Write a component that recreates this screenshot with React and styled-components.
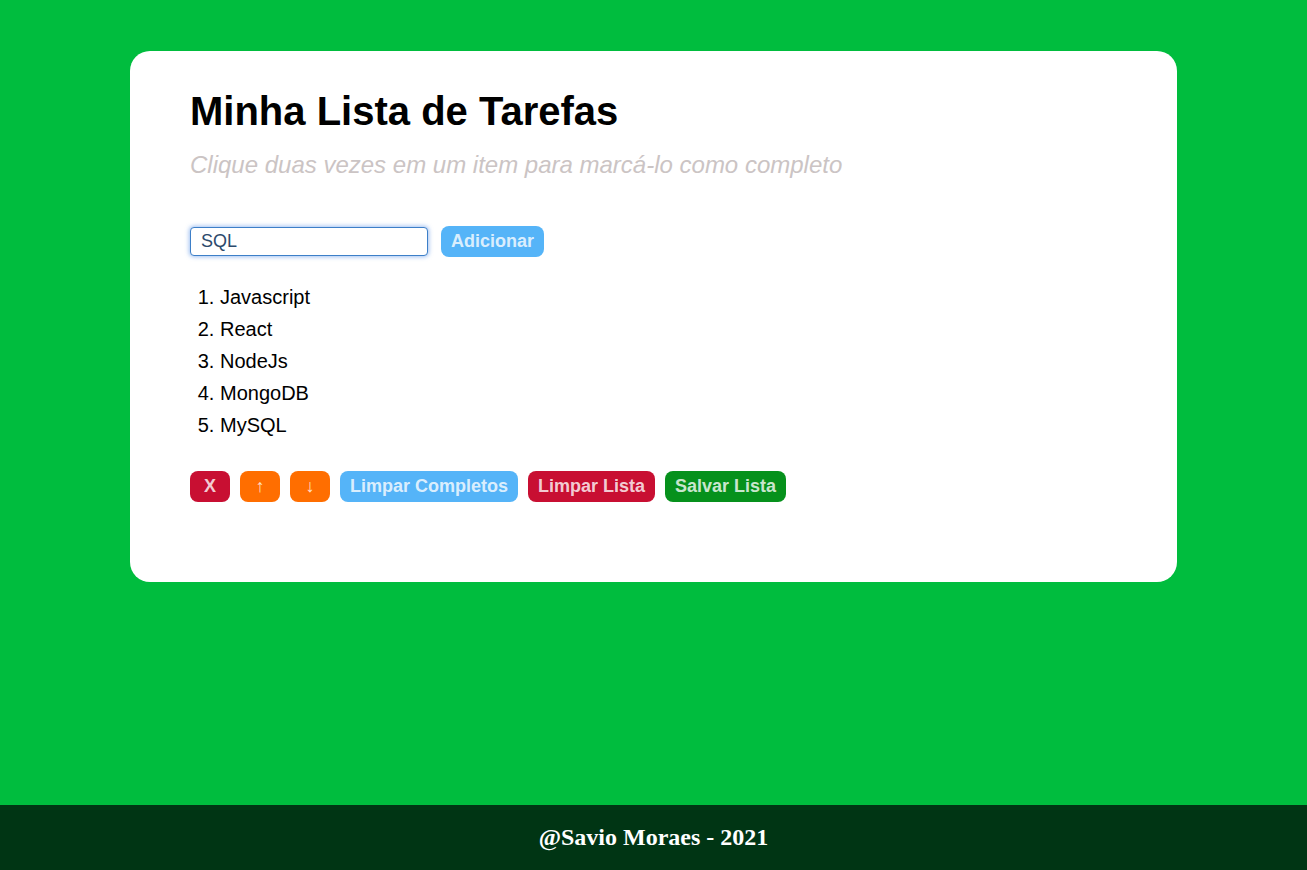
import React, { useState } from 'react'
import styled, { createGlobalStyle } from 'styled-components'

const GlobalStyle = createGlobalStyle`
    html, body {
        margin: 0;
        padding: 0;
        height: 100%;
    }
    body {
        background: #00bd3e;
        font-family: "Liberation Sans", Arial, sans-serif;
    }
    #root {
        min-height: 100%;
        display: flex;
        flex-direction: column;
    }
`;

const initialTasks = ['Javascript', 'React', 'NodeJs', 'MongoDB', 'MySQL']

function App() {
    const [tasks] = useState(initialTasks)
    const [text, setText] = useState('SQL')

    return (
        <>
            <GlobalStyle />
            <Main>
                <Card>
                    <Title>Minha Lista de Tarefas</Title>
                    <Subtitle>Clique duas vezes em um item para marcá-lo como completo</Subtitle>
                    <InputRow>
                        <TaskInput value={text} onChange={(e) => setText(e.target.value)} />
                        <Button $bg="#55b4f8">Adicionar</Button>
                    </InputRow>
                    <TaskList>
                        {tasks.map((task) => (
                            <li key={task}>{task}</li>
                        ))}
                    </TaskList>
                    <Actions>
                        <Button $bg="#c80f32" $square>X</Button>
                        <Button $bg="#ff6e00" $square $arrow>↑</Button>
                        <Button $bg="#ff6e00" $square $arrow>↓</Button>
                        <Button $bg="#55b4f8">Limpar Completos</Button>
                        <Button $bg="#c80f32">Limpar Lista</Button>
                        <Button $bg="#06911c">Salvar Lista</Button>
                    </Actions>
                </Card>
            </Main>
            <Footer>@Savio Moraes - 2021</Footer>
        </>
    )
}

const Main = styled.main`
    flex: 1;
    height: 805px;
    box-sizing: border-box;
    padding: 51px 130px 0;
`;

const Card = styled.section`
    box-sizing: border-box;
    background: #ffffff;
    border-radius: 20px;
    padding: 38px 60px 80px;
`;

const Title = styled.h1`
    margin: 0;
    font-size: 40px;
    font-weight: 700;
    color: #000;
`;

const Subtitle = styled.p`
    margin: 17px 0 0;
    font-size: 24px;
    font-style: italic;
    color: #cbc4c4;
`;

const InputRow = styled.div`
    display: flex;
    align-items: center;
    gap: 13px;
    margin-top: 47px;
`;

const TaskInput = styled.input`
    width: 238px;
    height: 29px;
    box-sizing: border-box;
    border: 1px solid #3d7fc8;
    border-radius: 4px;
    box-shadow: 0 0 4px 1px rgba(80, 140, 230, 0.55);
    padding: 0 10px;
    font-family: "Liberation Sans", Arial, sans-serif;
    font-size: 18px;
    color: #2c4a6c;
    outline: none;
`;

const Button = styled.button`
    height: 31px;
    min-width: ${({ $square }) => ($square ? '40px' : 'auto')};
    padding: 0 10px;
    border: none;
    border-radius: 8px;
    background: ${({ $bg }) => $bg};
    color: rgba(255, 255, 255, 0.8);
    font-family: "Liberation Sans", Arial, sans-serif;
    font-size: 18px;
    font-weight: ${({ $arrow }) => ($arrow ? 400 : 700)};
    cursor: pointer;
`;

const TaskList = styled.ol`
    margin: 24px 0 0;
    padding-left: 30px;
    font-size: 20px;
    line-height: 32px;
    color: #000;
`;

const Actions = styled.div`
    display: flex;
    gap: 10px;
    margin-top: 30px;
`;

const Footer = styled.footer`
    height: 65px;
    display: flex;
    align-items: center;
    justify-content: center;
    background: #003514;
    color: #ffffff;
    font-family: "Liberation Serif", "Times New Roman", serif;
    font-size: 24px;
    font-weight: 700;
`;

export default App
